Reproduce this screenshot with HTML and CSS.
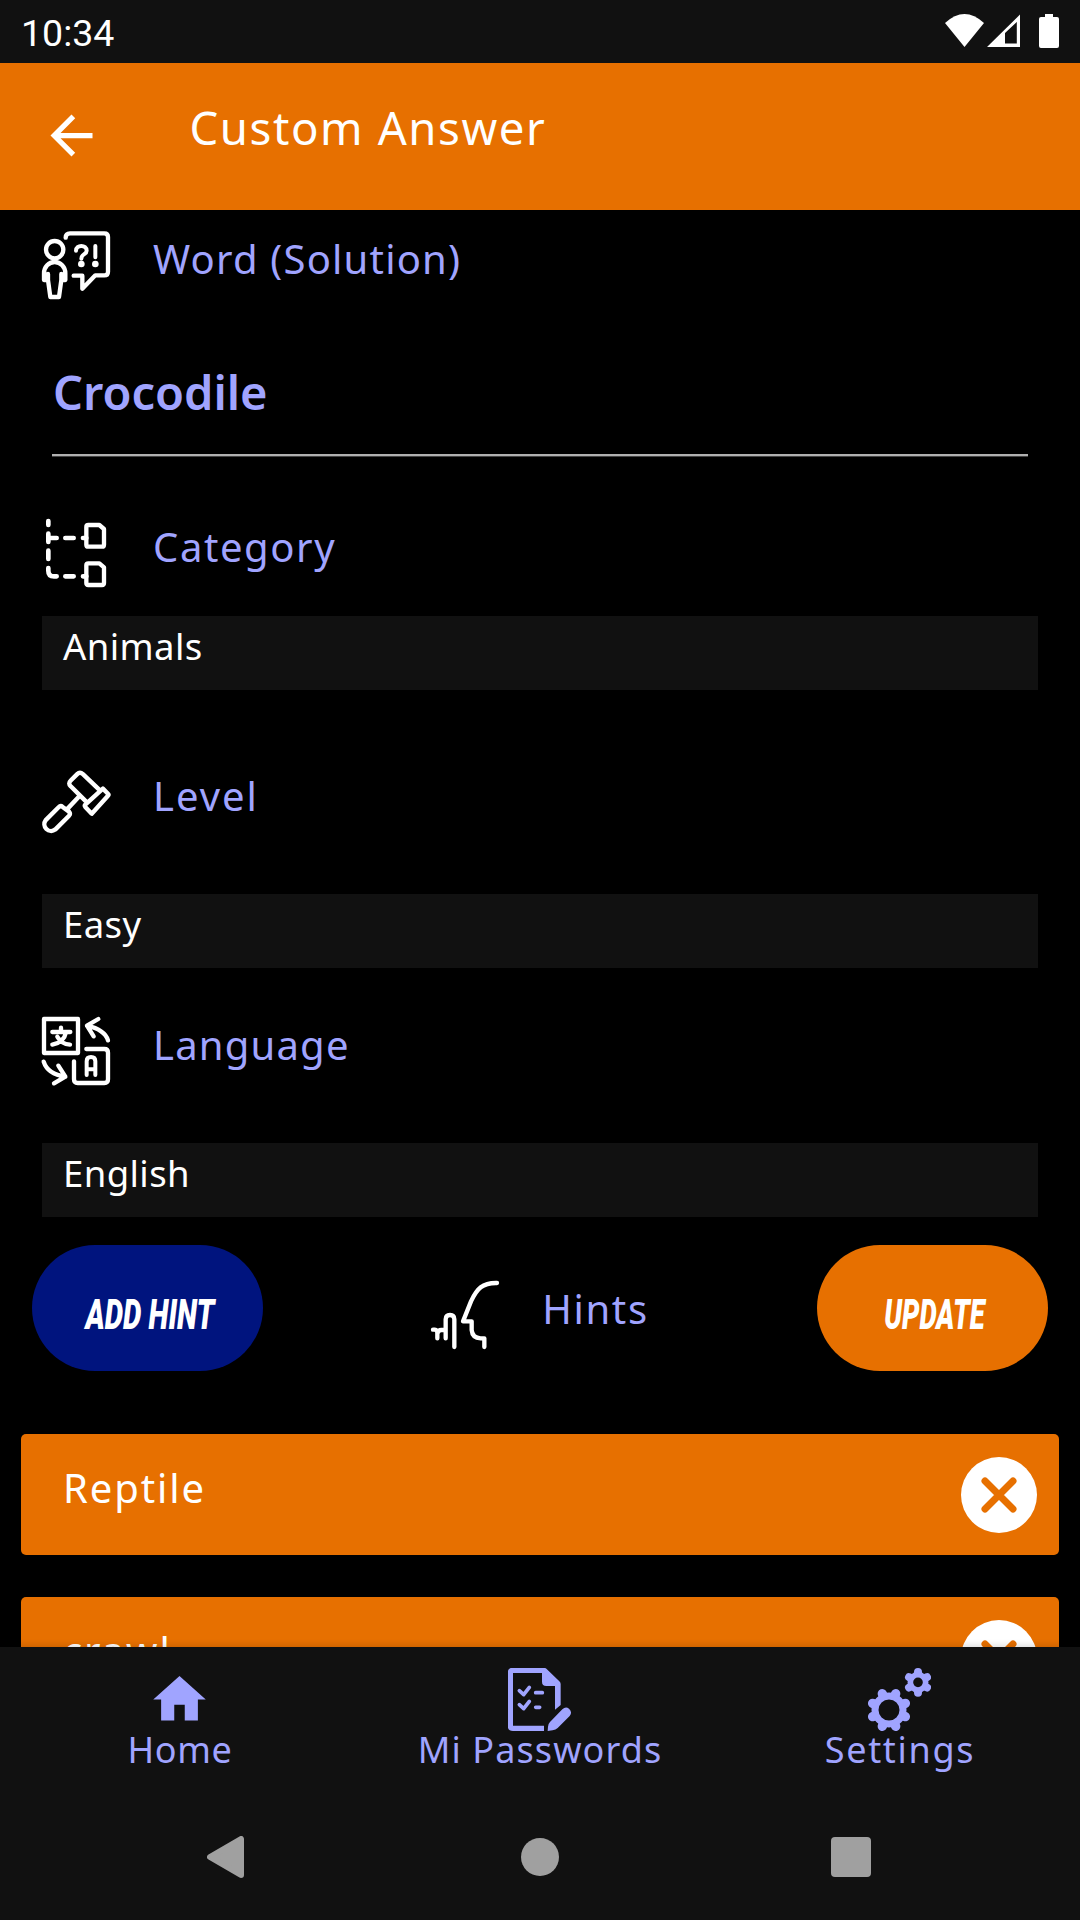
FILE: index.html
```html
<!DOCTYPE html>
<html lang="en">
<head>
<meta charset="utf-8">
<title>Custom Answer</title>
<link rel="stylesheet" href="styles.css">
</head>
<body>
<div class="screen">
  <div class="status">
    <span class="clock">10:34</span>
    <svg class="status-icons" viewBox="945 13 114 36">
      <path d="M945 23Q964.5 5 984 23L964.5 47Z"/>
      <path fill-rule="evenodd" d="M987 47L1020 14.5V47ZM1005 33V43.5H1016.8V22Z"/>
      <path d="M1045 14h8v3h4q2 0 2 2v27q0 2-2 2h-16q-2 0-2-2V19q0-2 2-2h4z"/>
    </svg>
  </div>

  <header class="appbar">
    <svg class="back" viewBox="0 0 24 24"><path d="M20 11H7.83l5.59-5.59L12 4l-8 8 8 8 1.41-1.41L7.83 13H20z"/></svg>
    <h1 class="title">Custom Answer</h1>
  </header>

  <main class="content">
    <div class="label-row">
      <svg class="icon" viewBox="66 63 204 204" stroke-width="13">
        <circle cx="104" cy="119" r="26"/>
        <path d="M84 210H72v-20a32 34 0 0 1 64 0v20h-12M84 210l7 51h26l7-51M84 192v18M124 192v18"/>
        <path d="M137 83q0-13 13-13H253q11 0 11 11V185q0 11-11 11H226L187 236V197H161"/>
        <path stroke-width="12" d="M168 122c0-19 32-19 32 0 0 12-16 9-16 24M226 108v34"/>
        <circle class="dot" cx="184" cy="162" r="10"/>
        <circle class="dot" cx="226" cy="162" r="10"/>
      </svg>
      <span class="label label-word">Word (Solution)</span>
    </div>
    <div class="field">Crocodile</div>

    <div class="label-row row-category">
      <svg class="icon" viewBox="126 537 204 204" stroke-width="14">
        <path d="M145 543v12M145 581v25M145 632v25M145 684v8q0 17 17 17h8M145 594h25M196 594h25M249 594h10M196 709h25M249 709h10"/>
        <path stroke-width="13" d="M265 555h33l14 12v47q0 6-6 6h-41q-6 0-6-6v-53q0-6 6-6zM265 670h33l14 12v47q0 6-6 6h-41q-6 0-6-6v-53q0-6 6-6z"/>
      </svg>
      <span class="label label-category">Category</span>
    </div>
    <div class="spinner spinner-category">Animals</div>

    <div class="label-row row-level">
      <svg class="icon" viewBox="67 55 201 201" stroke-width="13">
        <path d="M116 171L78 209a20 20 0 0 0 28 28L147 196q5-6 0-12l-19-14q-6-5-12 1zM140 178l38-40"/>
        <path d="M236 119L188 73q-9-8-17 0L152 92q-9 9 0 17l47 47M247 116l15 15q3 3 0 6L214 190l-19-20q-3-4 0-7z"/>
      </svg>
      <span class="label label-level">Level</span>
    </div>
    <div class="spinner">Easy</div>

    <div class="label-row row-language">
      <svg class="icon" viewBox="66 51 204 204" stroke-width="13">
        <path d="M72 57h102v102H72z"/>
        <path d="M123 83v12M97 96h54M138 97q-6 30-41 37M112 110q12 22 38 24"/>
        <path d="M264 121q-10-32-63-44M235 57l-34 20 20 32M71 185q12 38 65 45M115 197l21 33-34 20"/>
        <path d="M199 147H253q11 0 11 11V238q0 11-11 11H173q-11 0-11-11V184"/>
        <path stroke-width="12" d="M200 225v-41q0-13 13-13t13 13v41M200 208h26"/>
      </svg>
      <span class="label label-language">Language</span>
    </div>
    <div class="spinner">English</div>

    <div class="actions">
      <button class="pill pill-add"><span>ADD HINT</span></button>
      <div class="hints">
        <svg class="icon" viewBox="96 123 204 204" stroke-width="13">
          <path d="M294 129C250 128 234 146 216 184L192 244h26v26q2 24 27 25h11v26"/>
          <path d="M166 321V238q0-13-13-13t-13 13V295M102 269h5q8 1 8 9V295M115 282q2-12 12-12h12"/>
        </svg>
        <span class="label label-hints">Hints</span>
      </div>
      <button class="pill pill-update"><span>UPDATE</span></button>
    </div>

    <div class="cards">
      <div class="card">
        <span class="hint">Reptile</span>
        <svg class="remove" viewBox="0 0 76 76"><circle cx="38" cy="38" r="38"/><path d="M24 24L52 52M52 24L24 52"/></svg>
      </div>
      <div class="card">
        <span class="hint">crawl</span>
        <svg class="remove" viewBox="0 0 76 76"><circle cx="38" cy="38" r="38"/><path d="M24 24L52 52M52 24L24 52"/></svg>
      </div>
    </div>
  </main>

  <nav class="tabs">
    <div class="tab tab-home">
      <svg class="tab-icon" viewBox="0 0 24 24"><path d="M10 20v-6h4v6h5v-8h3L12 3 2 12h3v8z"/></svg>
      <span>Home</span>
    </div>
    <div class="tab tab-passwords">
      <svg class="tab-icon" viewBox="324 84 189 189">
        <path class="line" stroke-width="16" d="M432 265H339q-8 0-8-8V99q0-8 8-8H433"/>
        <path d="M426 84h8q4 0 6 3l38 37q4 4 4 8v63l-17 14V138H439q-13 0-13-13z"/>
        <path d="M443 273l1-13q0-8 6-14L487 208q10-10 20-2 11 11 2 22L473 264q-6 6-15 7z"/>
        <path class="line round" stroke-width="11" d="M358 152l13 12 17-22M358 194l13 12 17-22M407 158h20M407 202h12"/>
      </svg>
      <span>Mi Passwords</span>
    </div>
    <div class="tab tab-settings">
      <svg class="tab-icon" viewBox="204 84 189 189">
        <g transform="translate(267 210)">
          <circle class="line" r="42" stroke-width="21"/>
          <path class="line round" stroke-width="28" d="M18-44L20-49M44-18L49-20M44 18L49 20M18 44L20 49M-18 44L-20 49M-44 18L-49 20M-44-18L-49-20M-18-44L-20-49"/>
        </g>
        <g transform="translate(354 127)">
          <circle class="line" r="23" stroke-width="17"/>
          <path class="line round" stroke-width="24" d="M0-28V-31M24-14L27-15.500M24 14L27 15.500M0 28V31M-24 14L-27 15.500M-24-14L-27-15.500"/>
        </g>
      </svg>
      <span>Settings</span>
    </div>
  </nav>

  <div class="sysnav">
    <svg class="sys-back" viewBox="0 0 37 42"><path d="M3 21L34 3V39Z"/></svg>
    <div class="sys-home"></div>
    <div class="sys-recent"></div>
  </div>
</div>
</body>
</html>
```
FILE: styles.css
```css
* { box-sizing: border-box; }

body {
  margin: 0;
  background: #000;
  font-family: "Noto Sans", sans-serif;
  color: #fff;
}

.screen {
  display: flex;
  flex-direction: column;
  width: 1080px;
  height: 1920px;
  overflow: hidden;
}

svg { display: block; flex: none; }

.status {
  display: flex;
  flex: none;
  justify-content: space-between;
  height: 63px;
  padding: 0 21px;
  background: #111;
}
.clock { font: 37.5px/67px Roboto, sans-serif; }
.status-icons { width: 114px; height: 36px; margin-top: 13px; fill: #fff; }

.appbar {
  display: flex;
  flex: none;
  height: 147px;
  padding-left: 39.5px;
  background: #e77000;
}
.back { width: 63px; height: 63px; margin-top: 41px; fill: #fff; }
.title {
  margin: 0 0 0 87px;
  font-size: 45.5px;
  font-weight: 400;
  line-height: 129px;
  letter-spacing: 1.6px;
}

.content {
  display: flex;
  flex: 1;
  flex-direction: column;
  min-height: 0;
  padding-top: 21px;
  overflow: hidden;
}

.label-row {
  display: flex;
  flex: none;
  gap: 43px;
  height: 68px;
  padding-left: 42px;
}
.row-category { margin-top: 63px; }
.row-level { margin-top: 78px; }
.row-language { margin-top: 49px; }

.icon {
  width: 68px;
  height: 68px;
  overflow: visible;
  fill: none;
  stroke: #fff;
  stroke-linecap: round;
  stroke-linejoin: round;
}
.dot { fill: #fff; stroke: none; }

.label {
  font-size: 40px;
  line-height: 56px;
  color: #a0a4ff;
  white-space: nowrap;
}
.label-word { letter-spacing: 1.2px; }
.label-category { letter-spacing: 1.6px; }
.label-level { letter-spacing: 2px; }
.label-language { letter-spacing: 1.2px; }
.label-hints { letter-spacing: 1.6px; }

.field {
  flex: none;
  height: 129px;
  margin: 28px 52px 0;
  padding-left: 1px;
  border-bottom: 2px solid #b0b0b0;
  box-shadow: 0 1px #444;
  font-size: 47px;
  font-weight: 600;
  line-height: 130px;
  color: #a0a4ff;
}

.spinner {
  flex: none;
  height: 74px;
  margin: 58px 42px 0;
  padding-left: 21px;
  background: #111;
  font-size: 36.5px;
  line-height: 60px;
  letter-spacing: .4px;
}
.spinner-category { margin-top: 29px; }

.actions {
  display: flex;
  flex: none;
  align-items: center;
  justify-content: space-between;
  height: 126px;
  margin-top: 28px;
  padding: 0 32px;
}
.pill {
  display: flex;
  align-items: center;
  justify-content: center;
  width: 231px;
  height: 126px;
  padding: 11px 0 0 4px;
  border: 0;
  border-radius: 63px;
  font: italic 900 43px Roboto, sans-serif;
  color: #fff;
  white-space: nowrap;
}
.pill-add { background: #00147e; }
.pill-update { background: #e77000; }
.pill-add span { transform: scaleX(.68); }
.pill-update span { transform: scaleX(.64); }

.hints { display: flex; gap: 43px; padding-top: 14px; }

.cards {
  display: flex;
  flex: none;
  flex-direction: column;
  gap: 42px;
  margin-top: 63px;
  padding: 0 21px;
}
.card {
  display: flex;
  align-items: center;
  justify-content: space-between;
  height: 121px;
  padding: 0 22.5px 0 42px;
  border-radius: 5px;
  background: #e77000;
}
.hint {
  align-self: flex-start;
  font-size: 40px;
  line-height: 108px;
  letter-spacing: 1.9px;
}
.remove { width: 76px; height: 76px; fill: #fff; }
.remove path { stroke: #e77000; stroke-width: 7; stroke-linecap: round; }

.tabs {
  display: flex;
  flex: none;
  height: 147px;
  padding-top: 21px;
  background: #111;
  box-shadow: 0 0 8px rgba(0, 0, 0, .2);
}
.tab {
  display: flex;
  flex: 1;
  flex-direction: column;
  align-items: center;
  font-size: 36px;
  line-height: 38px;
  color: #a0a4ff;
}
.tab-home { letter-spacing: .6px; }
.tab-passwords { letter-spacing: 1.1px; }
.tab-settings { letter-spacing: 1.7px; }
.tab-icon { width: 63px; height: 63px; margin-right: 1px; fill: #a0a4ff; }
.line { fill: none; stroke: #a0a4ff; }
.round { stroke-linecap: round; stroke-linejoin: round; }

.sysnav {
  display: flex;
  flex: none;
  align-items: center;
  height: 126px;
  padding-left: 207px;
  background: #111;
}
.sys-back {
  width: 37px;
  height: 42px;
  fill: #a0a0a0;
  stroke: #a0a0a0;
  stroke-width: 6;
  stroke-linejoin: round;
}
.sys-home {
  width: 38px;
  height: 38px;
  margin-left: 277px;
  border-radius: 50%;
  background: #a0a0a0;
}
.sys-recent {
  width: 40px;
  height: 40px;
  margin-left: 272px;
  border-radius: 4px;
  background: #a0a0a0;
}
```
